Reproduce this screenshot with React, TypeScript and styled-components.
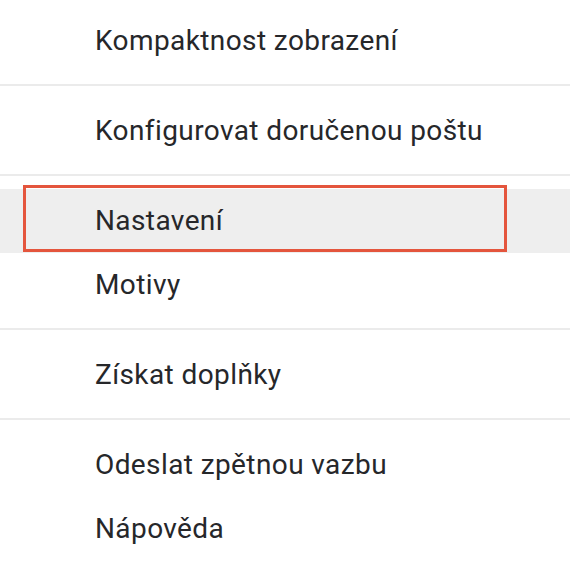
import styled, { createGlobalStyle } from "styled-components";

const GlobalStyle = createGlobalStyle`
  html, body {
    margin: 0;
    padding: 0;
    background: #ffffff;
  }
`;

interface iItem {
  label: string;
  active?: boolean;
}

const groups: iItem[][] = [
  [{ label: "Kompaktnost zobrazení" }],
  [{ label: "Konfigurovat doručenou poštu" }],
  [{ label: "Nastavení", active: true }, { label: "Motivy" }],
  [{ label: "Získat doplňky" }],
  [{ label: "Odeslat zpětnou vazbu" }, { label: "Nápověda" }],
];

const App = () => {
  return (
    <>
      <GlobalStyle />
      <Menu>
        {groups.map((group, gi) => (
          <Group key={gi} $first={gi === 0}>
            {group.map((item) => (
              <Item key={item.label} $active={!!item.active}>
                <Label>{item.label}</Label>
                {item.active && <Marker />}
              </Item>
            ))}
          </Group>
        ))}
      </Menu>
    </>
  );
};

export default App;

const Menu = styled.div`
  width: 570px;
  height: 564px;
  overflow: hidden;
  padding-top: 9px;
  box-sizing: border-box;
  background: #ffffff;
  font-family: Roboto, "Noto Sans", Arial, sans-serif;
`;

const Group = styled.div<{ $first: boolean }>`
  display: flex;
  flex-direction: column;
  border-top: ${(p) => (p.$first ? "none" : "2px solid #ebebeb")};
  margin-top: ${(p) => (p.$first ? "0" : "11px")};
  padding-top: ${(p) => (p.$first ? "0" : "13px")};
`;

const Item = styled.div<{ $active: boolean }>`
  position: relative;
  height: 64px;
  display: flex;
  align-items: center;
  padding-left: 95px;
  background: ${(p) => (p.$active ? "#eeeeee" : "transparent")};
`;

const Label = styled.span`
  font-size: 28px;
  letter-spacing: 0.4px;
  color: #26272a;
  line-height: 1;
  white-space: nowrap;
`;

const Marker = styled.div`
  position: absolute;
  left: 23px;
  top: -4px;
  width: 484px;
  height: 67px;
  box-sizing: border-box;
  border: 3px solid #e4553d;
  pointer-events: none;
`;
